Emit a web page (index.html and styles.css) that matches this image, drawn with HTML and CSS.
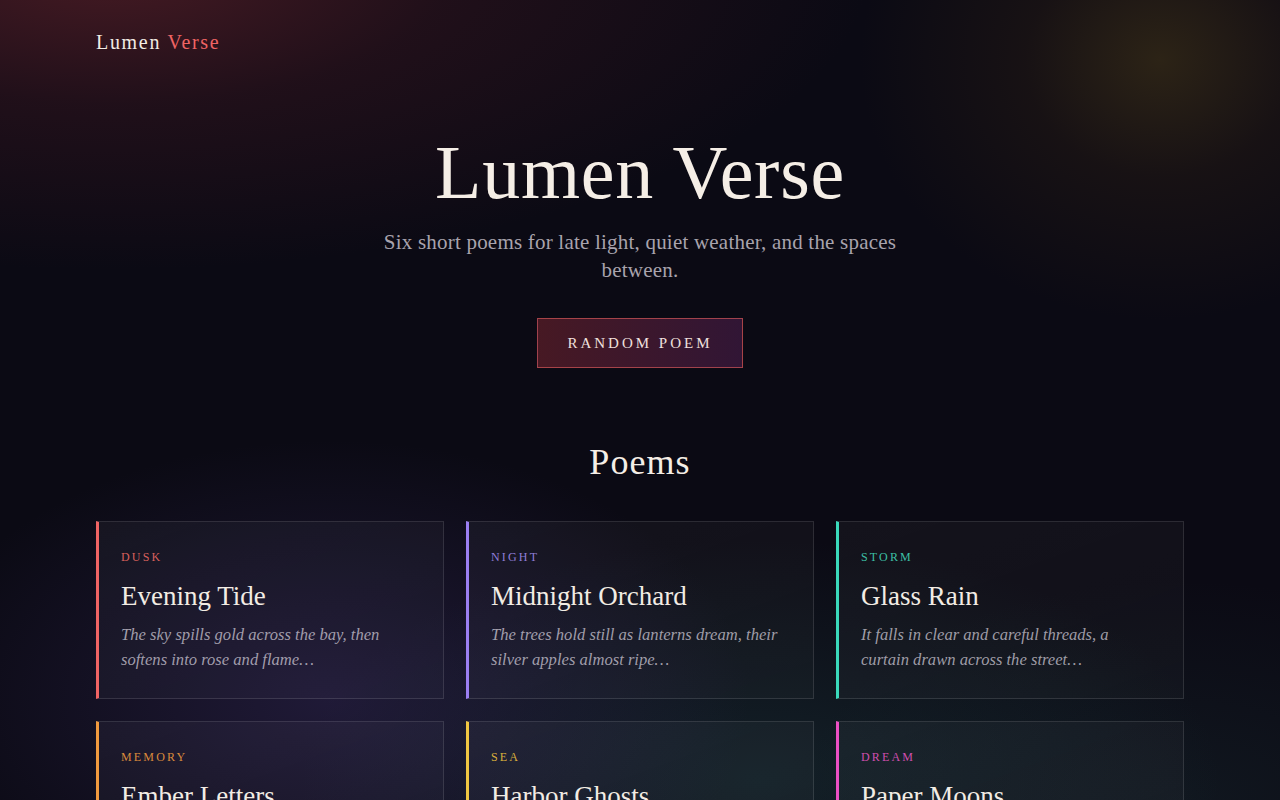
FILE: index.html
```html
<!DOCTYPE html>
<html lang="en">
<head>
<meta charset="utf-8">
<title>Lumen Verse</title>
<link rel="stylesheet" href="styles.css">
</head>
<body>
<header class="site-header">
  <a class="logo" href="#">Lumen <span class="logo-accent">Verse</span></a>
</header>
<main>
  <section class="hero">
    <h1 class="hero-title">Lumen Verse</h1>
    <p class="hero-sub">Six short poems for late light, quiet weather, and the spaces between.</p>
    <button class="btn" type="button">Random Poem</button>
  </section>
  <section class="poems">
    <h2 class="section-title">Poems</h2>
    <div class="grid">
      <article class="card card-dusk">
        <div class="card-tag">Dusk</div>
        <h3 class="card-title">Evening Tide</h3>
        <p class="card-excerpt">The sky spills gold across the bay, then softens into rose and flame…</p>
      </article>
      <article class="card card-night">
        <div class="card-tag">Night</div>
        <h3 class="card-title">Midnight Orchard</h3>
        <p class="card-excerpt">The trees hold still as lanterns dream, their silver apples almost ripe…</p>
      </article>
      <article class="card card-storm">
        <div class="card-tag">Storm</div>
        <h3 class="card-title">Glass Rain</h3>
        <p class="card-excerpt">It falls in clear and careful threads, a curtain drawn across the street…</p>
      </article>
      <article class="card card-memory">
        <div class="card-tag">Memory</div>
        <h3 class="card-title">Ember Letters</h3>
        <p class="card-excerpt">I keep your words inside a tin, still warm from every reading…</p>
      </article>
      <article class="card card-sea">
        <div class="card-tag">Sea</div>
        <h3 class="card-title">Harbor Ghosts</h3>
        <p class="card-excerpt">The boats come home without their names, and fog forgets the shore…</p>
      </article>
      <article class="card card-dream">
        <div class="card-tag">Dream</div>
        <h3 class="card-title">Paper Moons</h3>
        <p class="card-excerpt">We folded moons from old receipts and hung them over sleep…</p>
      </article>
    </div>
  </section>
</main>
</body>
</html>
```

FILE: styles.css
```css
* { box-sizing: border-box; }

html, body {
  margin: 0;
  padding: 0;
}

body {
  min-height: 100vh;
  background-color: #0b0a14;
  background-image:
    radial-gradient(ellipse 760px 300px at 110px -30px, rgba(105, 36, 44, 0.62) 0%, rgba(80, 28, 38, 0.3) 45%, rgba(60, 20, 30, 0) 100%),
    radial-gradient(ellipse 300px 260px at 1160px 60px, rgba(90, 70, 25, 0.42) 0%, rgba(60, 40, 20, 0.25) 45%, rgba(40, 25, 20, 0) 100%),
    radial-gradient(ellipse 420px 260px at 330px 700px, rgba(70, 55, 120, 0.35), rgba(70, 55, 120, 0) 100%),
    radial-gradient(ellipse 460px 240px at 760px 780px, rgba(40, 90, 90, 0.28), rgba(40, 90, 90, 0) 100%),
    radial-gradient(ellipse 380px 220px at 1180px 800px, rgba(40, 80, 80, 0.18), rgba(40, 80, 80, 0) 100%);
  background-repeat: no-repeat;
  color: #f2ece4;
  font-family: "Liberation Serif", "Times New Roman", serif;
}

.site-header {
  padding: 24px 96px 0;
}

.logo {
  display: inline-block;
  font-size: 20px;
  line-height: 36px;
  letter-spacing: 0.085em;
  color: #f2ece4;
  text-decoration: none;
}

.logo-accent {
  color: #f06464;
}

.hero {
  display: flex;
  flex-direction: column;
  align-items: center;
  text-align: center;
  padding-top: 70px;
}

.hero-title {
  margin: 0;
  font-size: 76px;
  line-height: 84px;
  font-weight: 400;
  letter-spacing: 0.01em;
  color: #f5eee6;
}

.hero-sub {
  margin: 14px 0 0;
  max-width: 560px;
  font-size: 21px;
  line-height: 28px;
  letter-spacing: 0.01em;
  color: #a8a3ad;
}

.btn {
  margin-top: 34px;
  height: 50px;
  padding: 0 29px;
  background: linear-gradient(90deg, rgba(120, 36, 48, 0.55), rgba(80, 30, 80, 0.55));
  border: 1px solid rgba(220, 90, 90, 0.65);
  border-radius: 0;
  color: #efe0de;
  font-family: "Liberation Serif", "Times New Roman", serif;
  font-size: 15px;
  letter-spacing: 0.2em;
  text-transform: uppercase;
  cursor: pointer;
}

.poems {
  padding: 73px 96px 0;
}

.section-title {
  margin: 0;
  text-align: center;
  font-size: 36px;
  line-height: 43px;
  font-weight: 400;
  letter-spacing: 0.03em;
  color: #f5eee6;
}

.grid {
  margin-top: 36.6px;
  display: grid;
  grid-template-columns: repeat(3, 1fr);
  gap: 22px;
}

.card {
  min-height: 178px;
  padding: 26px 26px 26px 22px;
  border: 1px solid rgba(255, 255, 255, 0.11);
  border-left: 3px solid #f06464;
  background: linear-gradient(160deg, rgba(255, 255, 255, 0.035), rgba(255, 255, 255, 0.02));
}

.card-tag {
  font-size: 12px;
  line-height: 18px;
  letter-spacing: 0.18em;
  text-transform: uppercase;
  color: #d8605c;
}

.card-title {
  margin: 13px 0 0;
  font-size: 27px;
  line-height: 34px;
  font-weight: 400;
  color: #f2ece4;
}

.card-excerpt {
  margin: 9px 0 0;
  font-size: 16.6px;
  line-height: 25px;
  font-style: italic;
  color: rgba(215, 210, 222, 0.72);
}

.card-dusk { border-left-color: #f06464; }
.card-dusk .card-tag { color: #d8605c; }

.card-night { border-left-color: #9b7ff2; }
.card-night .card-tag { color: #8f7ed8; }

.card-storm { border-left-color: #3ad9bb; }
.card-storm .card-tag { color: #3cbfa4; }

.card-memory { border-left-color: #f19a3e; }
.card-memory .card-tag { color: #d98a3c; }

.card-sea { border-left-color: #f0c642; }
.card-sea .card-tag { color: #d9b03c; }

.card-dream { border-left-color: #ec4fc4; }
.card-dream .card-tag { color: #cf4fae; }
```
